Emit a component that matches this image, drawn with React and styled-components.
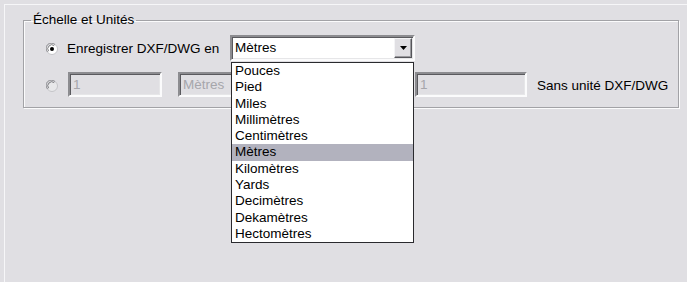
import React from "react";
import styled, { createGlobalStyle } from "styled-components";

const GlobalStyle = createGlobalStyle`
  html, body { margin: 0; padding: 0; background: #e0dfe3; }
  body { font-family: "Liberation Sans", Arial, sans-serif; font-size: 13.5px; color: #000; }
  * { box-sizing: border-box; }
`;

const Page = styled.div`
  width: 687px;
  height: 282px;
  padding: 4px 0 0 4px;
  overflow: hidden;
`;

const Panel = styled.div`
  height: 100%;
  border-top: 1px solid #f6f6f8;
  border-left: 1px solid #f6f6f8;
  padding: 7px 0 0 18px;
`;

const Group = styled.fieldset`
  width: 656px;
  margin: 0;
  padding: 7px 0 10px 0;
  border: 1px solid #a2a2a6;
  box-shadow: 1px 1px 0 #fbfbfc, inset 1px 1px 0 #fbfbfc;
  min-width: 0;
`;

const Legend = styled.legend`
  margin-left: 7px;
  padding: 0 2px;
  line-height: 16px;
  height: 16px;
`;

const Rows = styled.div`
  display: flex;
  flex-direction: column;
  gap: 11px;
  padding-left: 22px;
`;

const Row = styled.div`
  display: flex;
  align-items: center;
  height: ${(p) => p.$h}px;
`;

const Label = styled.span`
  width: ${(p) => (p.$w ? `${p.$w}px` : "auto")};
  margin-left: ${(p) => p.$ml || 0}px;
  margin-top: 2px;
  white-space: nowrap;
  line-height: 16px;
`;

const RadioBox = styled.span`
  display: inline-flex;
  width: 12px;
  height: 12px;
  margin-top: 2px;
  margin-right: ${(p) => p.$mr}px;
`;

const Radio = ({ checked, disabled, mr }) => (
  <RadioBox $mr={mr}>
    <svg width="12" height="12" viewBox="0 0 12 12">
      <circle cx="6" cy="6" r="5.5" fill={disabled ? "#e8e8ea" : "#fff"} stroke="#c4c4c8" />
      <path d="M1.6 9 A5 5 0 0 1 9 1.6" fill="none" stroke="#909094" strokeWidth="1" />
      <path d="M2.6 8.2 A4 4 0 0 1 8.2 2.6" fill="none" stroke="#606064" strokeWidth="0.8" />
      {checked && <circle cx="6" cy="6" r="2" fill="#000" />}
    </svg>
  </RadioBox>
);

const Sunken = styled.div`
  position: relative;
  display: flex;
  align-items: center;
  width: ${(p) => p.$w}px;
  height: ${(p) => p.$h}px;
  margin-left: ${(p) => p.$ml || 0}px;
  border-style: solid;
  border-width: 2px;
  border-color: #8c8c90 #fbfbfc #fbfbfc #8c8c90;
  box-shadow: inset 1px 1px 0 #5a5a5e, inset -1px -1px 0 #e6e6e8;
  background: ${(p) => (p.$disabled ? "#e0dfe3" : "#fff")};
  color: ${(p) => (p.$disabled ? "#a6a6ab" : "#000")};
  padding-left: 3px;
  line-height: 16px;
`;

const ArrowButton = styled.div`
  margin-left: auto;
  margin-right: 1px;
  width: 18px;
  height: 20px;
  display: flex;
  align-items: center;
  justify-content: center;
  background: #e0dfe3;
  border-style: solid;
  border-width: 1px;
  border-color: #f4f4f6 #55555a #55555a #f4f4f6;
  box-shadow: inset -1px -1px 0 #9a9a9e;
`;

const List = styled.ul`
  position: absolute;
  top: calc(100% + 3px);
  left: -1px;
  width: 183px;
  margin: 0;
  padding: 0;
  list-style: none;
  background: #fff;
  border: 1px solid #2a2a2e;
  z-index: 10;
`;

const Item = styled.li`
  height: 16.3px;
  line-height: 16.3px;
  padding-left: 3px;
  color: #000;
  background: ${(p) => (p.$active ? "#b2b2be" : "transparent")};
`;

const units = [
  "Pouces",
  "Pied",
  "Miles",
  "Millimètres",
  "Centimètres",
  "Mètres",
  "Kilomètres",
  "Yards",
  "Decimètres",
  "Dekamètres",
  "Hectomètres",
];

export default function App() {
  return (
    <>
      <GlobalStyle />
      <Page>
        <Panel>
          <Group>
            <Legend>Échelle et Unités</Legend>
            <Rows>
              <Row $h={26}>
                <Radio checked mr={9} />
                <Label $w={163}>Enregistrer DXF/DWG en</Label>
                <Sunken $w={185} $h={26}>
                  Mètres
                  <ArrowButton>
                    <svg width="7" height="4" viewBox="0 0 7 4">
                      <path d="M0 0 H7 L3.5 4 Z" fill="#000" />
                    </svg>
                  </ArrowButton>
                  <List>
                    {units.map((u) => (
                      <Item key={u} $active={u === "Mètres"}>
                        {u}
                      </Item>
                    ))}
                  </List>
                </Sunken>
              </Row>
              <Row $h={25}>
                <Radio disabled mr={10} />
                <Sunken $w={94} $h={25} $disabled>
                  1
                </Sunken>
                <Sunken $w={227} $h={25} $ml={16} $disabled>
                  Mètres
                </Sunken>
                <Sunken $w={112} $h={25} $ml={10} $disabled>
                  1
                </Sunken>
                <Label $ml={10}>Sans unité DXF/DWG</Label>
              </Row>
            </Rows>
          </Group>
        </Panel>
      </Page>
    </>
  );
}
